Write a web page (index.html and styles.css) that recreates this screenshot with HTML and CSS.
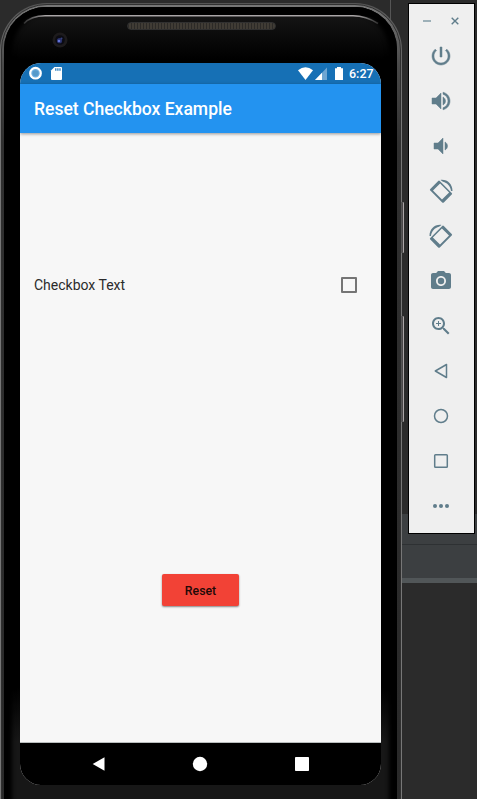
FILE: index.html
```html
<!DOCTYPE html>
<html lang="en">
<head>
<meta charset="utf-8">
<title>Reset Checkbox Example</title>
<link rel="stylesheet" href="styles.css">
</head>
<body>
<div class="desktop">
  <div class="backdrop"><i class="tab-line"></i><i class="panel"></i><i class="divider"></i></div>
  <section class="phone">
    <i class="side-key power-key"></i><i class="side-key volume-key"></i>
    <div class="bezel">
      <div class="glass">
        <svg class="gloss" width="370" height="24" viewBox="0 0 370 24" fill="none">
          <defs><linearGradient id="shine" gradientUnits="userSpaceOnUse" x1="0" x2="370"><stop stop-color="#999" stop-opacity="0"/><stop offset=".08" stop-color="#aaa6a7"/><stop offset=".92" stop-color="#aaa6a7"/><stop offset="1" stop-color="#999" stop-opacity="0"/></linearGradient></defs>
          <path d="M8 8.500Q15 .9 29 .8H337Q350 .9 362 8.500" stroke="url(#shine)" stroke-width="1.600"/>
        </svg>
        <div class="speaker"></div>
        <svg class="camera" width="16" height="16" viewBox="0 0 16 16"><circle cx="8" cy="8" r="7.500" fill="#1d1b1c"/><circle cx="8" cy="8" r="4.800" fill="#0b0b12"/><circle cx="7.500" cy="8.700" r="2.600" fill="#28306a"/><circle cx="7" cy="9" r="1.300" fill="#6474d8"/><circle cx="9.500" cy="6.500" r="1" fill="#38427e"/></svg>
        <main class="screen">
          <header class="status">
            <svg width="361" height="21" viewBox="0 0 361 21" fill="#fff">
              <circle cx="15.500" cy="10.200" r="5.300" fill="#6daee0" stroke="#fff" stroke-width="2.200"/><circle cx="15.500" cy="10.200" r="3" fill="#559acb"/>
              <path d="M34.500 4H41q1 0 1 1v11q0 1-1 1h-9q-1 0-1-1V7.500z"/><path d="M35.200 5.300h1.200v2.500h-1.200zM37.300 5.300h1.200v2.500h-1.200zM39.400 5.300h1.200v2.500h-1.200z" fill="#1670b5"/>
              <path d="M278 7.200q7.500-5.800 15 0L285.500 17z"/>
              <path d="M307 4.500V17H295z" fill="#6fa6d2"/><path d="M302 9.700V17h-7z"/>
              <path d="M317 4h4v1.200h2V17h-8V5.200h2z"/>
            </svg>
            <span class="clock">6:27</span>
          </header>
          <header class="appbar"><h1>Reset Checkbox Example</h1></header>
          <div class="content">
            <label class="row"><span>Checkbox Text</span><i class="box"></i></label>
            <button class="reset">Reset</button>
          </div>
          <nav class="navbar">
            <svg width="14" height="16" viewBox="0 0 14 16"><path d="M.7 8 12.500 1.200v13.600z" fill="#fff"/></svg>
            <svg width="16" height="16" viewBox="0 0 16 16"><circle cx="8" cy="8" r="7.200" fill="#fff"/></svg>
            <svg width="14" height="14" viewBox="0 0 14 14"><rect width="14" height="14" rx=".8" fill="#fff"/></svg>
          </nav>
        </main>
      </div>
    </div>
  </section>
  <aside class="toolbar">
    <div class="window-actions">
      <svg width="8" height="8" viewBox="0 0 8 8"><path d="M0 4h8" stroke="#9db0b8" stroke-width="2"/></svg>
      <svg width="8" height="8" viewBox="0 0 8 8"><path d="m.7.700 6.600 6.600m0-6.600L.7 7.300" stroke="#607d8b" stroke-width="1.400"/></svg>
    </div>
    <div class="tool bold"><svg viewBox="0 0 24 24"><path d="M13 3h-2v10h2V3zm4.830 2.170-1.420 1.420C17.990 7.860 19 9.810 19 12c0 3.870-3.130 7-7 7s-7-3.130-7-7c0-2.190 1.010-4.140 2.580-5.420L6.170 5.170C4.230 6.820 3 9.260 3 12c0 4.970 4.030 9 9 9s9-4.030 9-9c0-2.740-1.230-5.180-3.170-6.830z"/></svg></div>
    <div class="tool bold"><svg viewBox="0 0 24 24"><path d="M3 9v6h4l5 5V4L7 9H3zm13.500 3c0-1.770-1.020-3.290-2.500-4.030v8.050c1.480-.73 2.500-2.250 2.500-4.020zM14 3.230v2.060c2.890.86 5 3.540 5 6.710s-2.110 5.850-5 6.710v2.060c4.010-.91 7-4.490 7-8.770s-2.990-7.860-7-8.770z"/></svg></div>
    <div class="tool bold"><svg viewBox="0 0 24 24"><path d="M18.500 12c0-1.770-1.020-3.290-2.500-4.030v8.050c1.480-.73 2.500-2.250 2.500-4.020zM5 9v6h4l5 5V4L9 9H5z"/></svg></div>
    <div class="tool"><svg viewBox="0 0 24 24"><path fill-rule="evenodd" d="M10.800 2q-.8-.8-1.600 0L1.300 9.900q-.8.800 0 1.600L13.200 23.400q.8.800 1.600 0l7.900-7.900q.8-.8 0-1.600zM11.100 4.500 20.100 13.500 13 20.600 4 11.600z"/><path d="M11.500.9C18.500.2 23.500 5 23.500 12h-1.500C21.500 7 18.200 3.700 14 2.700z"/></svg></div>
    <div class="tool"><svg viewBox="0 0 24 24"><g transform="matrix(-1 0 0 1 24 0)"><path fill-rule="evenodd" d="M10.800 2q-.8-.8-1.600 0L1.300 9.900q-.8.800 0 1.600L13.200 23.400q.8.800 1.600 0l7.900-7.900q.8-.8 0-1.600zM11.100 4.500 20.100 13.500 13 20.600 4 11.600z"/><path d="M11.500.9C18.500.2 23.500 5 23.500 12h-1.500C21.500 7 18.200 3.700 14 2.700z"/></g></svg></div>
    <div class="tool"><svg viewBox="0 0 24 24"><circle cx="12" cy="12" r="3.200"/><path d="M9 2 7.170 4H4c-1.100 0-2 .9-2 2v12c0 1.100.9 2 2 2h16c1.100 0 2-.9 2-2V6c0-1.100-.9-2-2-2h-3.170L15 2H9zm3 15c-2.760 0-5-2.240-5-5s2.240-5 5-5 5 2.240 5 5-2.240 5-5 5z"/></svg></div>
    <div class="tool"><svg viewBox="0 0 24 24"><path d="M15.500 14h-.79l-.28-.27C15.410 12.590 16 11.110 16 9.500 16 5.910 13.090 3 9.500 3S3 5.910 3 9.500 5.910 16 9.500 16c1.610 0 3.090-.59 4.230-1.570l.27.280v.79l5 4.990L20.490 19l-4.990-5zm-6 0C7.010 14 5 11.990 5 9.500S7.010 5 9.500 5 14 7.010 14 9.500 11.990 14 9.500 14zm2.500-4h-2v2H9v-2H7V9h2V7h1v2h2v1z"/></svg></div>
    <div class="tool line"><svg viewBox="0 0 20 20"><path d="M15.500 3.500v13L4.300 10z"/></svg></div>
    <div class="tool line"><svg viewBox="0 0 20 20"><circle cx="10" cy="10" r="6.500"/></svg></div>
    <div class="tool line"><svg viewBox="0 0 20 20"><rect x="3.700" y="3.700" width="12.600" height="12.600" rx=".8"/></svg></div>
    <div class="tool"><svg viewBox="0 0 20 20"><circle cx="4" cy="10" r="2"/><circle cx="10" cy="10" r="2"/><circle cx="16" cy="10" r="2"/></svg></div>
  </aside>
</div>
</body>
</html>
```
FILE: styles.css
```css
* { box-sizing: border-box; }
body { margin: 0; font-family: Roboto, sans-serif; }
svg { display: block; }
.desktop { position: relative; width: 477px; height: 799px; overflow: hidden; background: #2b2b2b; }
.backdrop { height: 799px; padding-top: 514px; }
.backdrop i { display: block; }
.panel { height: 64px; background: linear-gradient(#3c3f41 30px, #2e3133 30px 31px, #3c3f41 31px); }
.divider { height: 5px; background: #515658; }
.tab-line { position: absolute; left: 390px; top: 0; width: 1px; height: 20px; background: #555; }

.phone { position: absolute; left: 0; top: 3px; width: 402px; height: 840px; border-radius: 47px 47px 0 0; padding: 1px; background: linear-gradient(#555, #777 100px, #777); }
.bezel { height: 100%; border-radius: 46px 46px 0 0; padding: 2px 3px 0 2px; border: 1px solid #303030; background: linear-gradient(#777, #4a4a4a 60px, #303030 140px, #292929); }
.glass { height: 100%; padding: 56px 0 0 16px; border-radius: 42px 42px 0 0; background: linear-gradient(#000 9px, #141414 10px, #000 52px, #000 680px, #171717 735px); box-shadow: inset 8px 4px 4px #000, inset -8px 4px 4px #000; }
.gloss { position: absolute; left: 16px; top: 12px; }
.speaker { position: absolute; left: 127px; top: 19px; width: 149px; height: 8px; border-radius: 4px; border: 1px solid #303030; background: repeating-linear-gradient(90deg, #2c2a27 0 1px, #403c35 1px 3px); }
.camera { position: absolute; left: 52px; top: 29px; }
.side-key { position: absolute; left: 401px; width: 3px; border: 1px solid #555; border-right-color: #aaa5a6; background: #4a4748; }
.power-key { top: 199px; height: 51px; }
.volume-key { top: 313px; height: 106px; }

.screen { display: flex; flex-direction: column; width: 361px; height: 722px; overflow: hidden; border-radius: 21px; background: #f7f7f7; }
.status { position: relative; height: 21px; background: #1670b5; }
.clock { position: absolute; left: 329px; top: 3px; color: #fff; font-size: 12.500px; line-height: 15px; font-weight: 500; }
.appbar { display: flex; align-items: center; height: 49px; padding: 0 14px 0; background: #2393f0; box-shadow: 0 1px 3px #0006; z-index: 1; }
h1 { margin: 0; color: #fff; font-size: 17.550px; line-height: 22px; font-weight: 500; white-space: nowrap; }
.content { display: flex; flex-direction: column; align-items: center; flex: 1; border-bottom: 1px solid #b9bdbd; }
.row { display: flex; align-items: center; justify-content: space-between; width: 100%; height: 40px; margin-top: 132px; padding: 0 24px 0 14px; color: #2b2b2b; font-size: 14px; }
.box { width: 16px; height: 16px; border: 2px solid #757575; border-radius: 1px; }
.reset { width: 77px; height: 32px; margin-top: 269px; padding: 1px 0 0; border: 0; border-radius: 2px; background: #f24236; color: #210907; font: 500 12.300px/16px Roboto, sans-serif; box-shadow: 0 1px 2px #0007; }
.navbar { display: flex; align-items: center; justify-content: space-between; height: 42px; padding: 0 72px; background: #000; }
.navbar svg:nth-child(2) { margin: 0 1px 0 -1px; }

.toolbar { position: absolute; left: 408px; top: 3px; width: 67px; height: 531px; border: 1px solid #000; background: #efefef; }
.window-actions { display: flex; justify-content: space-between; height: 29px; padding: 13px 15px 0 14px; }
.tool { display: flex; align-items: center; justify-content: center; height: 45px; padding-right: 1px; }
.tool svg { width: 24px; height: 24px; fill: #607d8b; }
.tool.bold svg { stroke: #607d8b; stroke-width: .5; }
.tool.line svg { width: 20px; height: 20px; fill: none; stroke: #607d8b; stroke-width: 1.500; stroke-linejoin: round; }
.tool:last-child svg { width: 20px; height: 20px; }
```
